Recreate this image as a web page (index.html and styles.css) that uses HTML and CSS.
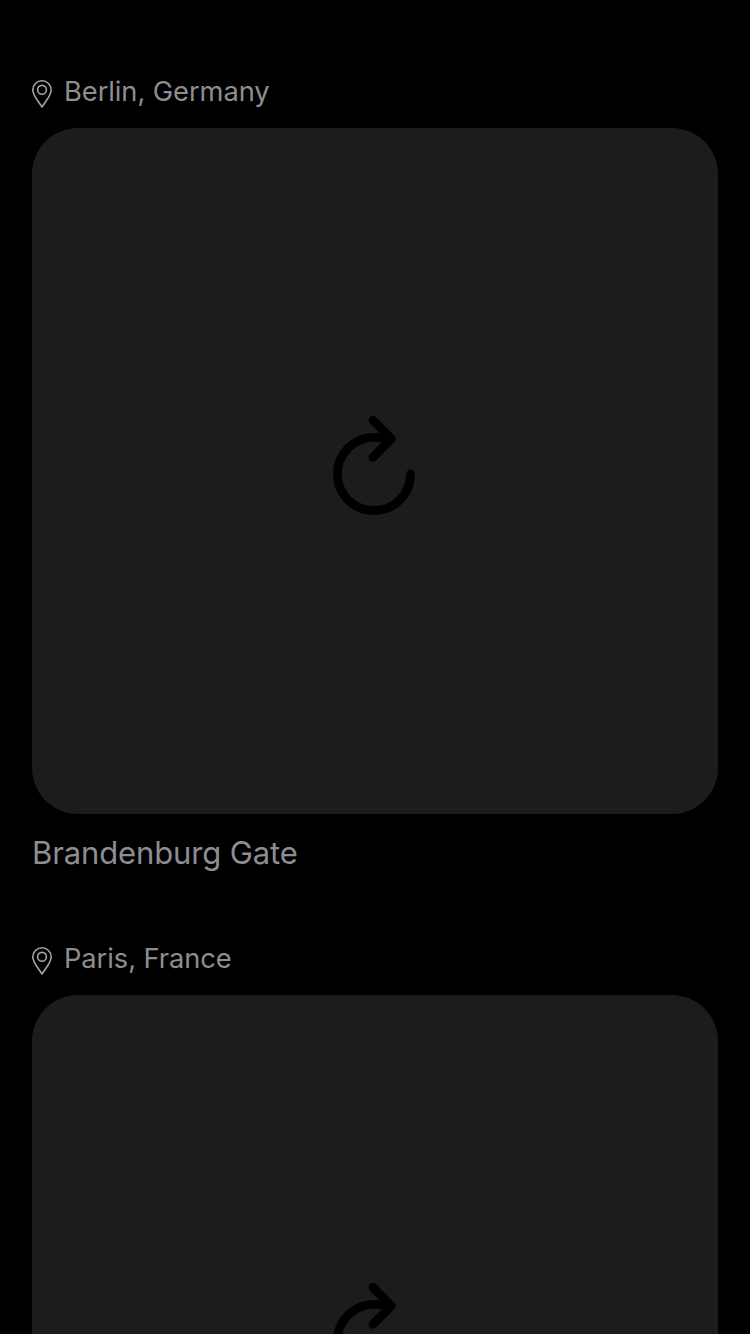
FILE: index.html
```html
<!DOCTYPE html>
<html lang="en">
<head>
<meta charset="utf-8">
<title>Landmarks</title>
<link rel="stylesheet" href="styles.css">
</head>
<body>
<svg class="symbols" aria-hidden="true">
  <symbol id="pin" viewBox="0 0 22 30">
    <path d="M11 28C8.5 23.5 1.8 17 1.8 11a9.2 9.2 0 0 1 18.4 0C20.2 17 13.5 23.5 11 28Z"/>
    <circle cx="11" cy="10.8" r="4.4"/>
  </symbol>
  <symbol id="reload" viewBox="0 0 84 101">
    <path d="M78.6 59A36.6 36.6 0 1 1 42 22.4Q50 22.4 59 23.9"/>
    <path d="M41 5.3 59.2 23.8 41 42.3"/>
  </symbol>
</svg>
<main class="feed">
  <article class="post">
    <header class="location"><svg class="pin"><use href="#pin"/></svg><span class="place">Berlin, Germany</span></header>
    <div class="photo"><svg class="reload"><use href="#reload"/></svg></div>
    <p class="caption">Brandenburg Gate</p>
  </article>
  <article class="post">
    <header class="location"><svg class="pin"><use href="#pin"/></svg><span class="place">Paris, France</span></header>
    <div class="photo"><svg class="reload"><use href="#reload"/></svg></div>
  </article>
</main>
</body>
</html>
```
FILE: styles.css
```css
body {
  margin: 0;
  background: #000;
  color: #8d8d92;
  font-family: Inter, "Liberation Sans", sans-serif;
}
.symbols { display: none; }
.feed {
  display: flex;
  flex-direction: column;
  gap: 70px;
  box-sizing: border-box;
  height: 1334px;
  padding: 72px 32px 0;
  overflow: hidden;
}
.post { flex: none; }
.location {
  display: flex;
  align-items: center;
  height: 40px;
  margin-bottom: 16px;
}
.pin {
  width: 22px;
  height: 30px;
  margin: 4px 11px 0 -1px;
  fill: none;
  stroke: #a5a5a8;
  stroke-width: 1.6;
  stroke-linejoin: round;
}
.place {
  font-size: 27.3px;
  line-height: 40px;
  letter-spacing: -0.07px;
  white-space: nowrap;
}
.photo {
  display: flex;
  justify-content: center;
  height: 686px;
  border-radius: 46px;
  background: #1c1c1e;
}
.reload {
  width: 84px;
  height: 101px;
  margin: 287px 2px 0 0;
  fill: none;
  stroke: #000;
  stroke-width: 8.8;
  stroke-linecap: round;
  stroke-linejoin: round;
}
.caption {
  height: 40px;
  margin: 19px 0 -4px;
  font-size: 31px;
  line-height: 40px;
  letter-spacing: -0.12px;
}
```
